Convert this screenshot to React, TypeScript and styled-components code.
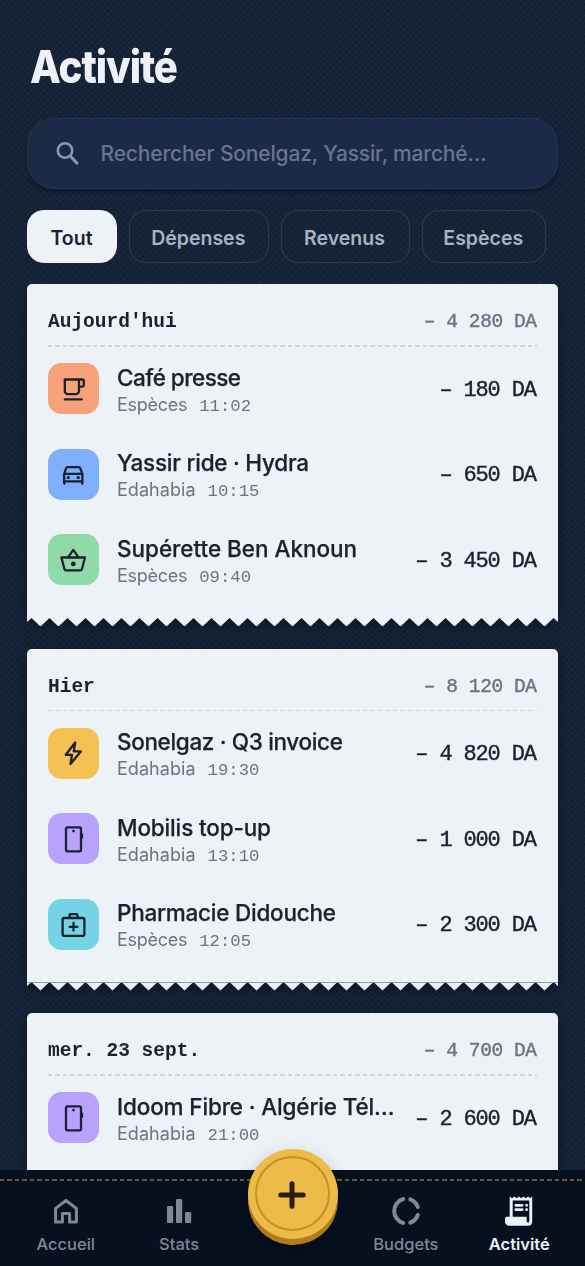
import React from "react";
import styled, { createGlobalStyle } from "styled-components";

const SANS = `Inter, "Noto Sans", sans-serif`;
const MONO = `"Liberation Mono", monospace`;

const Global = createGlobalStyle`
  * { box-sizing: border-box; }
  body { margin: 0; background: #142034; overflow: hidden; font-family: ${SANS}; }
`;

const Screen = styled.div`
  width: 585px;
  height: 1266px;
  display: flex;
  flex-direction: column;
  overflow: hidden;
  background:
    repeating-linear-gradient(135deg, rgba(110, 150, 200, 0.045) 0 1.5px, transparent 1.5px 4.5px),
    repeating-linear-gradient(45deg, rgba(0, 5, 15, 0.12) 0 1.5px, transparent 1.5px 4.5px),
    #162237;
`;

const Header = styled.header`
  flex: none;
  height: 284px;
  padding: 38.5px 27px 0;
`;

const Title = styled.h1`
  margin: 0 0 0 2.5px;
  height: 79px;
  line-height: 55px;
  font-size: 45px;
  font-weight: 800;
  letter-spacing: -1.2px;
  color: #eef2f8;
  white-space: nowrap;
  transform: scaleX(0.893);
  transform-origin: left;
`;

const Search = styled.div`
  height: 71px;
  display: flex;
  align-items: center;
  padding: 1px 0 0 25.5px;
  gap: 20px;
  border: 1.5px solid #273650;
  border-radius: 27px;
  background: #1b2a45;
  box-shadow: 0 3px 3px rgba(4, 10, 22, 0.4);
  color: #68758b;
  font-size: 21px;
  font-weight: 500;
  letter-spacing: -0.17px;
  white-space: nowrap;
`;

const SearchIcon = styled.svg`
  width: 27px;
  height: 30px;
  color: #8d98a8;
`;

const Chips = styled.div`
  display: flex;
  gap: 12px;
  margin-top: 21.5px;
`;

const Chip = styled.div<{ $w: number; $active?: boolean }>`
  width: ${(p) => p.$w}px;
  height: 52.5px;
  display: flex;
  align-items: center;
  justify-content: center;
  padding: 3px 1px 0 0;
  border-radius: 16.5px;
  border: 1.5px solid ${(p) => (p.$active ? "#edf2f6" : "#2e3a4c")};
  background: ${(p) => (p.$active ? "#edf2f6" : "transparent")};
  color: ${(p) => (p.$active ? "#1b2130" : "#a8b3c3")};
  font-size: 19.5px;
  font-weight: 600;
`;

const Feed = styled.main`
  height: 886px;
  flex: none;
  overflow: hidden;
  display: flex;
  flex-direction: column;
  gap: 22.5px;
  padding: 0 27px;
`;

const Receipt = styled.section`
  flex: none;
  height: 342px;
  display: flex;
  flex-direction: column;
  filter: drop-shadow(0 4px 7px rgba(5, 10, 20, 0.5));
`;

const Paper = styled.div`
  height: 333.5px;
  padding: 0 21px;
  border-radius: 5px 5px 0 0;
  background: #edf2f6;
`;

const Torn = styled.svg`
  display: block;
  width: 531px;
  height: 8.5px;
`;

const DayLine = styled.div`
  height: 61px;
  display: flex;
  justify-content: space-between;
  align-items: center;
  padding-top: 15px;
  font-family: ${MONO};
  font-size: 19.5px;
  white-space: pre;
`;

const Day = styled.span`
  font-weight: 700;
  color: #1b2130;
`;

const Total = styled.span`
  color: #6b7385;
  letter-spacing: -0.43px;
  margin-right: 0.5px;
  -webkit-text-stroke: 0.4px #6b7385;
`;

const Dashes = styled.div<{ $color: string }>`
  height: 1.5px;
  background: repeating-linear-gradient(90deg, ${(p) => p.$color} 0 4.5px, transparent 4.5px 7.5px);
`;

const Row = styled.div`
  height: 85.5px;
  display: flex;
  align-items: center;

  &:first-of-type {
    margin-top: -0.5px;
  }
`;

const Rows = styled.div`
  margin-top: -0.5px;
`;

const Tile = styled.div<{ $bg: string }>`
  width: 51px;
  height: 51px;
  flex: none;
  display: flex;
  align-items: center;
  justify-content: center;
  padding-right: 1px;
  border-radius: 13.5px;
  background: ${(p) => p.$bg};
  color: #1b2130;
`;

const Info = styled.div`
  flex: 1;
  min-width: 0;
  margin-left: 18px;
  padding-top: 3.5px;
`;

const Name = styled.div<{ $ls: number }>`
  line-height: 30px;
  font-size: 22.5px;
  font-weight: 500;
  letter-spacing: ${(p) => p.$ls}px;
  color: #1b2130;
  -webkit-text-stroke: 0.25px #1b2130;
  white-space: nowrap;
`;

const Sub = styled.div`
  display: flex;
  align-items: baseline;
  gap: 12px;
  line-height: 23.4px;
  font-size: 18px;
  color: #6b7385;
`;

const Source = styled.span<{ $tight: boolean }>`
  letter-spacing: ${(p) => (p.$tight ? -0.28 : 0.05)}px;
`;

const Time = styled.span`
  font-family: ${MONO};
  font-size: 17.3px;
`;

const Amount = styled.div`
  font-family: ${MONO};
  font-size: 22px;
  letter-spacing: -1.15px;
  margin-right: 1.2px;
  padding-top: 3px;
  color: #1b2130;
  -webkit-text-stroke: 0.4px #1b2130;
  white-space: pre;
`;

const Nav = styled.nav`
  height: 96px;
  flex: none;
  position: relative;
  background: #07101f;
  padding-top: 9px;
`;

const Tabs = styled.div`
  display: grid;
  grid-template-columns: repeat(5, 113.4px);
  justify-content: center;
  padding-top: 15.5px;
`;

const Tab = styled.div<{ $active?: boolean }>`
  display: flex;
  flex-direction: column;
  align-items: center;
  gap: 6.5px;
  color: ${(p) => (p.$active ? "#edf2f8" : "#7f8897")};
  font-size: 16.5px;
  line-height: 22px;
  font-weight: ${(p) => (p.$active ? 600 : 500)};
`;

const Coin = styled.div`
  position: absolute;
  left: 247.5px;
  top: -21.5px;
  width: 90px;
  height: 90px;
  border-radius: 50%;
  display: grid;
  place-items: center;
  background: #edbc48;
  box-shadow: 0 6px 0 #b07d1e, 0 9px 18px rgba(0, 0, 0, 0.35);
`;

const Ring = styled.div`
  width: 75px;
  height: 75px;
  border-radius: 50%;
  border: 2px solid #c1902b;
  display: flex;
  align-items: center;
  justify-content: center;
  padding: 2px 1px 0 0;
`;

const stroke = {
  fill: "none",
  stroke: "currentColor",
  strokeLinecap: "round" as const,
  strokeLinejoin: "round" as const,
};

const icons: Record<string, React.ReactNode> = {
  cup: (
    <path
      {...stroke}
      strokeWidth="2.3"
      d="M5.800 4.500H23.300a1.500 1.500 0 0 1 1.500 1.500v4.200a1.500 1.500 0 0 1-1.500 1.500H20M5.800 4.500v11.400a3.300 3.300 0 0 0 3.300 3.300h7.600a3.300 3.300 0 0 0 3.300-3.300V4.500M5.800 24.300h17"
    />
  ),
  car: (
    <>
      <path {...stroke} strokeWidth="2.3" d="M5.100 14v9.200M5.100 14 7.200 7.900c.2-.5.6-.8 1.100-.8h11.700c.5 0 .9.300 1.100.8l2.300 6.100v9.200M5.100 13.800h18.300M5.100 21.300h18.300M5.300 21v2.800M23.200 21v2.800" />
      <circle cx="9.300" cy="17.600" r="1.700" fill="currentColor" />
      <circle cx="19.200" cy="17.600" r="1.700" fill="currentColor" />
    </>
  ),
  basket: (
    <>
      <path {...stroke} strokeWidth="2.3" d="M2.400 11.500h23.600l-3.100 11.700c-.2.800-.8 1.200-1.600 1.200H7.100c-.8 0-1.400-.4-1.600-1.200zM9.200 11.200 14.300 3.900l5 7.300" />
      <circle cx="14.300" cy="17.900" r="2.400" fill="currentColor" />
    </>
  ),
  bolt: <path {...stroke} strokeWidth="2.3" d="M16.200 3.500 6.800 15.800h6.200L11.500 25 21.800 12.400h-7z" />,
  phone: (
    <>
      <rect {...stroke} strokeWidth="2.3" x="7" y="2.300" width="15" height="24" rx="1.500" />
      <circle cx="14.500" cy="6.100" r="1.400" fill="currentColor" />
      <path {...stroke} strokeWidth="2.300" d="M23 9.600v3.200" />
    </>
  ),
  kit: (
    <path {...stroke} strokeWidth="2.3" d="M5.100 8h18.800c.8 0 1.500.7 1.500 1.500v14.800c0 .8-.7 1.500-1.500 1.500H5.100c-.8 0-1.500-.7-1.500-1.500V9.500c0-.8.700-1.500 1.500-1.500zM10.500 7.700V5.200c0-.6.500-1.100 1.100-1.100h5.800c.6 0 1.100.5 1.100 1.100v2.500M14.500 12.900v7.800M10.600 16.800h7.800" />
  ),
};

type Tx = { icon: string; bg: string; name: string; sub: string; time: string; amount: string; ls: number };
type Group = { day: string; total: string; seam?: boolean; rows: Tx[] };

const groups: Group[] = [
  {
    day: "Aujourd'hui",
    total: "– 4 280 DA",
    rows: [
      { icon: "cup", bg: "#f7a27b", name: "Café presse", sub: "Espèces", time: "11:02", amount: "– 180 DA", ls: -0.52 },
      { icon: "car", bg: "#7fb0fd", name: "Yassir ride · Hydra", sub: "Edahabia", time: "10:15", amount: "– 650 DA", ls: -0.25 },
      { icon: "basket", bg: "#8fdaa6", name: "Supérette Ben Aknoun", sub: "Espèces", time: "09:40", amount: "– 3 450 DA", ls: -0.03 },
    ],
  },
  {
    day: "Hier",
    total: "– 8 120 DA",
    seam: true,
    rows: [
      { icon: "bolt", bg: "#f3c252", name: "Sonelgaz · Q3 invoice", sub: "Edahabia", time: "19:30", amount: "– 4 820 DA", ls: -0.35 },
      { icon: "phone", bg: "#b8a2fd", name: "Mobilis top-up", sub: "Edahabia", time: "13:10", amount: "– 1 000 DA", ls: -0.15 },
      { icon: "kit", bg: "#75d3e6", name: "Pharmacie Didouche", sub: "Espèces", time: "12:05", amount: "– 2 300 DA", ls: -0.24 },
    ],
  },
  {
    day: "mer. 23 sept.",
    total: "– 4 700 DA",
    rows: [
      { icon: "phone", bg: "#b8a2fd", name: "Idoom Fibre · Algérie Tél…", sub: "Edahabia", time: "21:00", amount: "– 2 600 DA", ls: -0.15 },
    ],
  },
];

const teeth =
  "M0 0V4L4.500 0" +
  Array.from({ length: 29 }, (_, i) => `L${13.5 + i * 18} 8.5L${22.5 + i * 18} 0`).join("") +
  "L531 4V0Z";

export default function App() {
  return (
    <Screen>
      <Global />
      <Header>
        <Title>Activité</Title>
        <Search>
          <SearchIcon viewBox="0 0 27 30">
            <circle {...stroke} strokeWidth="2.600" cx="11" cy="11.500" r="7.200" />
            <path {...stroke} strokeWidth="2.900" d="M16.500 17.300 23 24.200" />
          </SearchIcon>
          Rechercher Sonelgaz, Yassir, marché…
        </Search>
        <Chips>
          <Chip $w={90} $active>Tout</Chip>
          <Chip $w={139.5}>Dépenses</Chip>
          <Chip $w={129}>Revenus</Chip>
          <Chip $w={124.5}>Espèces</Chip>
        </Chips>
      </Header>
      <Feed>
        {groups.map((g) => (
          <Receipt key={g.day}>
            <Paper>
              <DayLine>
                <Day>{g.day}</Day>
                <Total>{g.total}</Total>
              </DayLine>
              <Dashes $color="#d2d7dc" />
              <Rows>
                {g.rows.map((r) => (
                  <Row key={r.name}>
                    <Tile $bg={r.bg}>
                      <svg width="28" height="28" viewBox="0 0 28 28">{icons[r.icon]}</svg>
                    </Tile>
                    <Info>
                      <Name $ls={r.ls}>{r.name}</Name>
                      <Sub>
                        <Source $tight={r.sub === "Espèces"}>{r.sub}</Source>
                        <Time>{r.time}</Time>
                      </Sub>
                    </Info>
                    <Amount>{r.amount}</Amount>
                  </Row>
                ))}
              </Rows>
            </Paper>
            <Torn viewBox="0 0 531 8.5">
              <path d={teeth} fill="#edf2f6" />
              {g.seam && <path d="M0 .5H531" stroke="#8e969f" strokeWidth="1" />}
            </Torn>
          </Receipt>
        ))}
      </Feed>
      <Nav>
        <Dashes $color="#6f5a3c" />
        <Tabs>
          <Tab>
            <svg width="30" height="30" viewBox="0 0 30 30">
              <path {...stroke} strokeWidth="3" d="M4.600 12.400 15 4.500l10.400 7.900v13.600h-6.800v-8.500h-7.200v8.500H4.600z" />
            </svg>
            Accueil
          </Tab>
          <Tab>
            <svg width="30" height="30" viewBox="0 0 30 30" fill="currentColor">
              <rect x="3" y="10" width="6.200" height="17" rx="1.300" />
              <rect x="12" y="3" width="6.200" height="24" rx="1.300" />
              <rect x="21" y="16" width="6.200" height="11" rx="1.300" />
            </svg>
            Stats
          </Tab>
          <span />
          <Tab>
            <svg width="30" height="30" viewBox="0 0 30 30">
              <g {...stroke} strokeWidth="4">
                <path d="M12.200 3A12.500 12.500 0 0 0 12.200 27" />
                <path d="M19.300 3.400A12.500 12.500 0 0 1 26.800 11" />
                <path d="M26.800 19A12.500 12.500 0 0 1 19.300 26.600" />
              </g>
            </svg>
            Budgets
          </Tab>
          <Tab $active>
            <svg width="30" height="30" viewBox="0 0 30 30" fill="currentColor">
              <path d="M5.700 .5 8 2.200 10.300.5 12.600 2.200 14.900.5 17.200 2.200 19.500.5 21.800 2.200 24.100.5 26.300 2.200 28.200.5V25.500A4.300 4.300 0 0 1 24 29.800H5.300A4.300 4.300 0 0 1 1 25.500V22.500Q1 20.800 2.800 20.800H5.700Z" />
              <path d="M8.700 4.500H25.300V25.200A1.300 1.300 0 0 1 22.700 25.200V20.800H8.700Z" fill="#07101f" />
              <path d="M11.800 9.300h6.400M11.800 13.700h6.400M22.600 9.300h.1M22.600 13.700h.1" stroke="currentColor" strokeWidth="2.800" strokeLinecap="round" />
            </svg>
            Activité
          </Tab>
        </Tabs>
        <Coin>
          <Ring>
            <svg width="30" height="30" viewBox="0 0 30 30">
              <path d="M15 3.800v22.400M3.800 15h22.400" stroke="#2b1d05" strokeWidth="5" strokeLinecap="round" />
            </svg>
          </Ring>
        </Coin>
      </Nav>
    </Screen>
  );
}
